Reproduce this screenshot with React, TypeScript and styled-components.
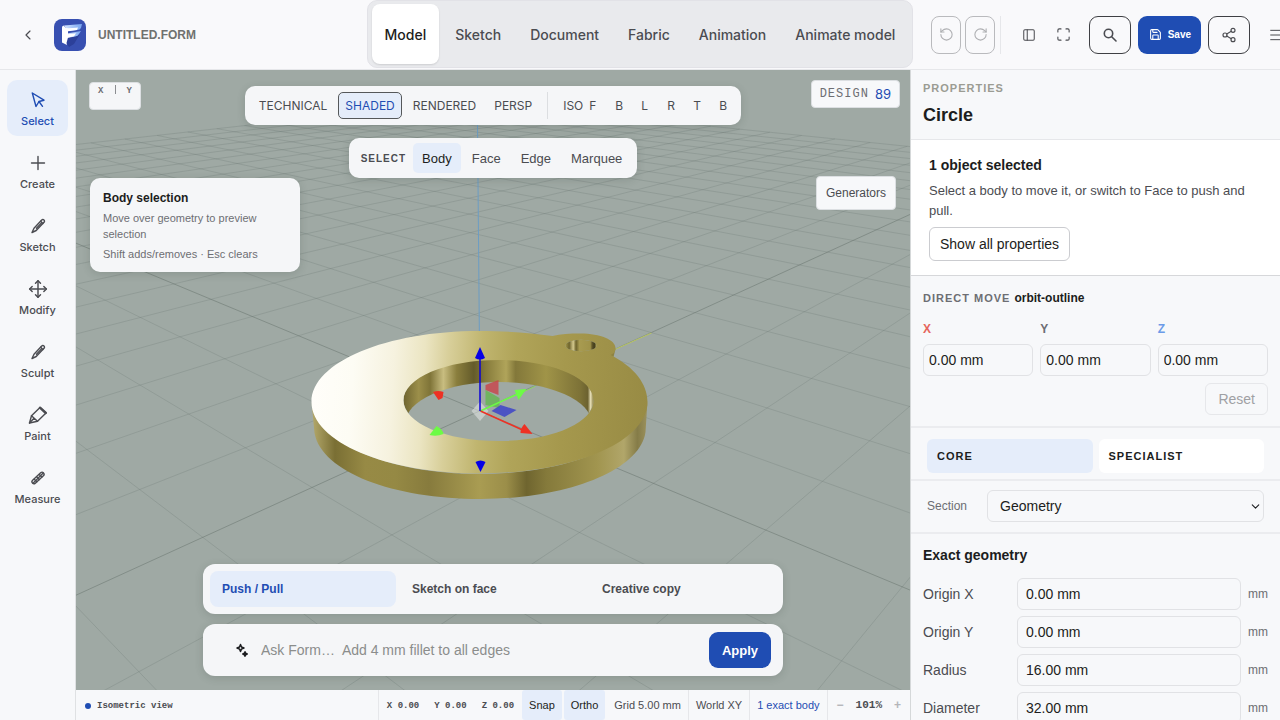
import React from "react";
import styled, { createGlobalStyle, css } from "styled-components";
import { ChevronDown, Maximize, Menu, Move, PanelLeft, RotateCcw, RotateCw, Save, Share2, ChevronLeft } from "lucide-react";

const sans = '"Liberation Sans", Arial, sans-serif';
const ui = 'Inter, "Liberation Sans", sans-serif';
const mono = '"Liberation Mono", monospace';

const ink = "#1c1d20";
const body = "#4b4c51";
const muted = "#6d6e73";
const blue = "#1f4db3";
const tint = "#e5edfa";
const line = "#e6e7ea";
const surface = "#f7f8fa";

const GlobalStyle = createGlobalStyle`
  *, *::before, *::after { box-sizing: border-box; }
  body { margin: 0; font-family: ${sans}; font-size: 14px; color: ${ink}; background: ${surface}; overflow: hidden; }
  button, input, select { font: inherit; color: inherit; margin: 0; }
  button { cursor: pointer; border: 0; background: none; padding: 0; }
  h1, h2, h3, p { margin: 0; }
`;

const Shell = styled.div`
  display: grid;
  grid-template-rows: 70px minmax(0, 1fr);
  height: 100vh;
`;

/* ---------- Header ---------- */

const Header = styled.header`
  display: grid;
  grid-template-columns: minmax(0, 1fr) auto minmax(0, 1fr);
  background: #f9f9fb;
  border-bottom: 1px solid ${line};
  overflow: hidden;
`;

const Brand = styled.div`
  display: flex;
  align-items: center;
  padding-left: 20px;
`;

const BackButton = styled.button`
  display: flex;
  width: 34px;
  color: ${body};
`;

const FileName = styled.h1`
  margin-left: 12px;
  font-size: 12px;
  font-weight: 700;
  color: #70716f;
`;

const ModeTabs = styled.nav`
  display: flex;
  gap: 3px;
  padding: 3px 4px;
  height: 68px;
  background: #e9eaed;
  border: 1px solid #e2e2e7;
  border-radius: 10px;
`;

const ModeTab = styled.button<{ $active?: boolean }>`
  padding: 0 13px;
  border-radius: 8px;
  font-family: ${ui};
  font-size: 14px;
  font-weight: 500;
  color: ${(p) => (p.$active ? ink : body)};
  ${(p) => p.$active && css`background: #fff; box-shadow: 0 1px 2px rgba(0, 0, 0, 0.12);`}
`;

const Actions = styled.div`
  display: flex;
  align-items: center;
  padding-left: 18px;
  color: ${body};
  white-space: nowrap;
`;

const HistoryGroup = styled.div`
  display: flex;
  gap: 4px;
  padding-right: 5px;
  border-right: 1px solid ${line};
`;

const HistoryButton = styled.button`
  display: flex;
  align-items: center;
  justify-content: center;
  width: 30px;
  height: 38px;
  border: 1px solid #b9babd;
  border-radius: 8px;
  color: #aeafb2;
`;

const PlainButton = styled.button`
  display: flex;
  flex: none;
  align-items: center;
  justify-content: center;
  width: 35px;
  height: 38px;
`;

const ViewGroup = styled.div`
  display: flex;
  padding: 0 8px 0 10px;
`;

const MainGroup = styled.div`
  display: flex;
  gap: 7px;
`;

const OutlineButton = styled.button`
  display: flex;
  align-items: center;
  justify-content: center;
  width: 42px;
  height: 38px;
  border: 1px solid #3f4044;
  border-radius: 9px;
`;

const SaveButton = styled.button`
  display: flex;
  align-items: center;
  justify-content: center;
  gap: 6px;
  width: 63px;
  height: 38px;
  border-radius: 9px;
  background: ${blue};
  color: #fff;
  font-size: 10px;
  font-weight: 700;
`;

const MenuButton = styled(PlainButton)`
  margin-left: 8px;
`;

/* ---------- Workspace ---------- */

const Workspace = styled.div`
  display: grid;
  grid-template-columns: 76px minmax(0, 1fr) 370px;
  min-height: 0;
`;

const Rail = styled.nav`
  display: flex;
  flex-direction: column;
  gap: 7px;
  padding: 10px 7px;
  background: ${surface};
  border-right: 1px solid #dfe1e3;
`;

const RailButton = styled.button<{ $active?: boolean }>`
  display: flex;
  flex-direction: column;
  align-items: center;
  gap: 3px;
  flex: none;
  height: 56px;
  padding-top: 10px;
  border-radius: 10px;
  font-family: ${ui};
  font-size: 11px;
  font-weight: 500;
  line-height: 16px;
  color: ${(p) => (p.$active ? blue : body)};
  background: ${(p) => (p.$active ? tint : "transparent")};
`;

const Center = styled.main`
  display: flex;
  flex-direction: column;
  min-width: 0;
  min-height: 0;
`;

const Viewport = styled.section`
  position: relative;
  flex: 1;
  min-height: 0;
  overflow: hidden;
  background: #9fa9a4;
`;

const SceneSvg = styled.svg`
  position: absolute;
  inset: 0;
  width: 100%;
  height: 100%;
`;

const floating = css`
  background: #f5f6f8;
  box-shadow: 0 2px 8px rgba(40, 50, 45, 0.16);
`;

const TopStack = styled.div`
  position: absolute;
  top: 16px;
  left: 0;
  right: 0;
  display: flex;
  flex-direction: column;
  align-items: center;
  gap: 13px;
`;

const ViewBar = styled.div`
  ${floating}
  display: flex;
  align-items: center;
  gap: 4px;
  height: 39px;
  padding: 0 7px;
  border-radius: 10px;
`;

const ShadeButton = styled.button<{ $active?: boolean }>`
  height: 27px;
  padding: 0 6px;
  border: 1px solid ${(p) => (p.$active ? "#55585a" : "transparent")};
  border-radius: 5px;
  font-family: ${ui};
  font-size: 12px;
  color: ${(p) => (p.$active ? blue : body)};
  background: ${(p) => (p.$active ? tint : "transparent")};
`;

const BarDivider = styled.span`
  width: 1px;
  height: 27px;
  margin: 0 4px;
  background: #dcdee1;
`;

const FaceViewButton = styled.button`
  display: flex;
  align-items: center;
  width: 22px;
  height: 27px;
  padding-left: 7px;
  font-family: ${ui};
  font-size: 12px;
  color: ${body};
`;

const SelectBar = styled.div`
  ${floating}
  display: flex;
  align-items: center;
  gap: 2px;
  height: 40px;
  padding: 0 6px 0 12px;
  border-radius: 10px;
`;

const BarLabel = styled.span`
  margin-right: 5px;
  font-size: 10px;
  font-weight: 700;
  letter-spacing: 1px;
  color: ${body};
`;

const SelectButton = styled.button<{ $active?: boolean }>`
  height: 30px;
  padding: 0 9px;
  border-radius: 5px;
  font-size: 13px;
  color: ${(p) => (p.$active ? ink : body)};
  background: ${(p) => (p.$active ? tint : "transparent")};
`;

const LeftStack = styled.div`
  position: absolute;
  top: 12px;
  left: 13px;
  display: flex;
  flex-direction: column;
  align-items: flex-start;
  gap: 68px;
`;

const AxisChip = styled.div`
  display: flex;
  justify-content: space-between;
  width: 52px;
  height: 28px;
  padding: 2px 8px;
  border: 1px solid #dcdfe2;
  border-radius: 4px;
  background: #f5f6f8;
  font-family: ${mono};
  font-size: 9px;
  font-weight: 700;
  line-height: 12px;
  color: ${muted};
`;

const AxisTick = styled.span`
  width: 1px;
  height: 9px;
  background: #8b8d91;
`;

const HintCard = styled.aside`
  ${floating}
  width: 210px;
  height: 94px;
  margin-left: 1px;
  padding: 12px 13px;
  border-radius: 10px;
  font-size: 11px;
  line-height: 16px;
  color: ${muted};
`;

const HintTitle = styled.h3`
  margin-bottom: 4px;
  font-size: 12px;
  line-height: 16px;
  color: ${ink};
`;

const HintText = styled.p`
  margin-bottom: 4px;
`;

const RightStack = styled.div`
  position: absolute;
  top: 10px;
  right: 10px;
  display: flex;
  flex-direction: column;
  align-items: flex-end;
  gap: 68px;
`;

const DesignChip = styled.div`
  display: flex;
  align-items: center;
  gap: 6px;
  height: 28px;
  padding: 0 8px;
  border: 1px solid #dcdfe2;
  border-radius: 4px;
  background: ${surface};
  font-family: ${mono};
  font-size: 12px;
  letter-spacing: 1px;
  color: ${muted};
`;

const DesignScore = styled.span`
  font-family: ${ui};
  font-size: 13px;
  letter-spacing: 0;
  color: ${blue};
`;

const GeneratorsButton = styled.button`
  height: 34px;
  margin-right: 4px;
  padding: 0 9px;
  border: 1px solid #dcdfe2;
  border-radius: 4px;
  background: ${surface};
  font-size: 12px;
  color: ${body};
`;

const BottomStack = styled.div`
  position: absolute;
  bottom: 14px;
  left: 0;
  right: 0;
  display: flex;
  flex-direction: column;
  gap: 10px;
  width: 580px;
  max-width: 90%;
  margin: 0 auto;
`;

const OperationBar = styled.div`
  ${floating}
  display: grid;
  grid-template-columns: repeat(3, 1fr);
  gap: 4px;
  height: 50px;
  padding: 7px;
  border-radius: 12px;
`;

const OperationButton = styled.button<{ $active?: boolean }>`
  padding: 0 12px;
  border-radius: 8px;
  text-align: left;
  font-size: 12px;
  font-weight: 700;
  color: ${(p) => (p.$active ? blue : body)};
  background: ${(p) => (p.$active ? tint : "transparent")};
`;

const PromptBar = styled.form`
  ${floating}
  display: flex;
  align-items: center;
  gap: 13px;
  height: 52px;
  padding: 0 12px 0 33px;
  border-radius: 12px;
`;

const PromptInput = styled.input`
  flex: 1;
  min-width: 0;
  padding: 0;
  border: 0;
  outline: 0;
  background: none;
  font-size: 14px;
  &::placeholder { color: #8b8d8c; opacity: 1; }
`;

const ApplyButton = styled.button`
  width: 62px;
  height: 36px;
  border-radius: 9px;
  background: ${blue};
  color: #fff;
  font-size: 13px;
  font-weight: 700;
`;

/* ---------- Status bar ---------- */

const StatusBar = styled.footer`
  display: flex;
  flex: none;
  height: 30px;
  background: ${surface};
  font-size: 11px;
  color: ${body};
`;

const StatusView = styled.div`
  display: flex;
  flex: 1;
  align-items: center;
  gap: 6px;
  padding: 1px 0 0 9px;
  border-right: 1px solid ${line};
  font-family: ${mono};
  font-size: 9px;
  font-weight: 700;
`;

const StatusDot = styled.span`
  width: 6px;
  height: 6px;
  border-radius: 50%;
  background: ${blue};
`;

const Coords = styled.div`
  display: flex;
  align-items: center;
  gap: 15px;
  padding: 1px 8px 0;
  font-family: ${mono};
  font-size: 9px;
  font-weight: 700;
`;

const StatusToggle = styled.button`
  margin-right: 2px;
  padding: 0 7px;
  background: ${tint};
  border-radius: 3px;
  color: ${ink};
`;

const StatusItem = styled.div<{ $accent?: boolean }>`
  display: flex;
  align-items: center;
  padding: 0 7px;
  border-right: 1px solid ${line};
  color: ${(p) => (p.$accent ? blue : "inherit")};
`;

const Zoom = styled.div`
  display: flex;
  align-items: center;
  gap: 12px;
  padding: 0 9px;
  font-family: ${mono};
  font-weight: 700;
`;

const ZoomStep = styled.button`
  font-family: ${sans};
  font-size: 12px;
  color: #b4b5b9;
`;

/* ---------- Properties ---------- */

const Panel = styled.aside`
  min-height: 0;
  overflow: hidden;
  background: ${surface};
  border-left: 1px solid #d5d8d9;
`;

const PanelHead = styled.div`
  height: 70px;
  padding: 11px 12px;
  border-bottom: 1px solid ${line};
`;

const Eyebrow = styled.div`
  font-size: 11px;
  font-weight: 700;
  letter-spacing: 1px;
  line-height: 14px;
  color: #9b9c93;
`;

const PanelTitle = styled.h2`
  margin-top: 8px;
  font-size: 18px;
  line-height: 24px;
`;

const SelectionCard = styled.section`
  padding: 16px 18px 14px;
  background: #fff;
  border-bottom: 1px solid #d6d7da;
`;

const SectionTitle = styled.h3`
  font-size: 14px;
  line-height: 18px;
`;

const SelectionText = styled.p`
  margin: 7px 0 6px;
  font-size: 13px;
  line-height: 20px;
  color: ${body};
`;

const PanelButton = styled.button`
  height: 34px;
  padding: 0 10px;
  border: 1px solid #cbccd0;
  border-radius: 6px;
  background: #fff;
  &:disabled { height: 32px; padding: 0 12px; border-color: ${line}; background: transparent; color: #9fa0a4; }
`;

const MoveSection = styled.section`
  padding: 12px 12px 11px;
  border-bottom: 2px solid #ebecef;
`;

const MoveHead = styled.div`
  display: flex;
  align-items: center;
  gap: 4px;
  height: 20px;
  font-size: 12px;
  font-weight: 700;
`;

const MoveLabel = styled(Eyebrow)`
  color: ${muted};
`;

const AxisGrid = styled.div`
  display: grid;
  grid-template-columns: repeat(3, 1fr);
  gap: 7px;
  margin: 12px 0 7px;
`;

const AxisField = styled.label<{ $color: string }>`
  display: grid;
  gap: 6px;
  font-size: 12px;
  font-weight: 700;
  line-height: 18px;
  color: ${(p) => p.$color};
`;

const TextInput = styled.input`
  width: 100%;
  min-width: 0;
  height: 32px;
  padding: 0 8px;
  border: 1px solid #e1e2e5;
  border-radius: 6px;
  background: transparent;
  font-size: 14px;
  font-weight: 400;
  color: ${ink};
`;

const AxisInput = styled(TextInput)`
  padding: 0 5px;
`;

const ResetRow = styled.div`
  display: flex;
  justify-content: flex-end;
`;

const ScopeTabs = styled.div`
  display: grid;
  grid-template-columns: 1fr 1fr;
  gap: 6px;
  padding: 11px 16px 6px;
  border-bottom: 2px solid #ebecef;
`;

const ScopeTab = styled.button<{ $active?: boolean }>`
  height: 34px;
  padding: 0 10px;
  border-radius: 6px;
  text-align: left;
  font-size: 11px;
  font-weight: 700;
  letter-spacing: 1px;
  background: ${(p) => (p.$active ? tint : "#fff")};
`;

const SectionRow = styled.label`
  display: flex;
  align-items: center;
  gap: 20px;
  height: 53px;
  padding: 0 16px 2px;
  border-bottom: 2px solid #ebecef;
  font-size: 12px;
  color: ${muted};
`;

const SelectWrap = styled.span`
  position: relative;
  flex: 1;
  color: ${ink};
`;

const SectionSelect = styled.select`
  appearance: none;
  width: 100%;
  height: 32px;
  padding: 0 12px;
  border: 1px solid #e1e2e5;
  border-radius: 6px;
  background: transparent;
  font-size: 14px;
`;

const SelectChevron = styled(ChevronDown)`
  position: absolute;
  right: 2px;
  top: 10px;
  pointer-events: none;
`;

const Geometry = styled.section`
  display: grid;
  gap: 6px;
  padding: 12px;
`;

const GeometryTitle = styled(SectionTitle)`
  margin-bottom: 8px;
`;

const FieldRow = styled.label`
  display: grid;
  grid-template-columns: 87px minmax(0, 1fr) 20px;
  align-items: center;
  gap: 7px;
  color: ${body};
`;

const Unit = styled.span`
  font-size: 12px;
  color: ${muted};
`;

/* ---------- Drawings ---------- */

const Logo = () => (
  <svg width="32" height="32" viewBox="0 0 32 32" aria-hidden="true">
    <defs>
      <linearGradient id="logoArm" x1="0" y1="0" x2="1" y2="0">
        <stop offset="0" stopColor="#d6e5ff" />
        <stop offset="1" stopColor="#77a5f0" />
      </linearGradient>
    </defs>
    <rect width="32" height="32" rx="8" fill="#3850b1" />
    <path d="M11 22l3-4 9-1 3-2-6 10-5 3z" fill="#2c409a" />
    <path d="M10 6.500L28 5l-1 4q-1 2-4 2l-9 1z" fill="url(#logoArm)" />
    <path d="M13 14.500L27 12l-2 3q-1 2-4 2.500L13 19z" fill="url(#logoArm)" />
    <path d="M8 8.500Q8 7 9.500 6.500L12 9q3 .5 12-.5l-1 2.500-9 1.200v3l8-1-2 3-6 1.200L12.500 24l.5 2-5-2.500z" fill="#fff" />
  </svg>
);

type IconProps = { children: React.ReactNode };
const RailIcon = ({ children }: IconProps) => (
  <svg width="20" height="20" viewBox="0 0 20 20" fill="none" stroke="currentColor" strokeWidth="1.4" strokeLinejoin="round" strokeLinecap="round" aria-hidden="true">
    {children}
  </svg>
);

const CursorIcon = () => (
  <RailIcon><path d="M4.300 3L16 10.200l-5 1.300-3 5z" /><path d="M11 11.500l3.500 4.800" /></RailIcon>
);
const PlusIcon = () => (
  <RailIcon><path d="M10 3.500v13M3.500 10h13" /></RailIcon>
);
const PenIcon = () => (
  <RailIcon>
    <path d="M16 4a1.500 1.500 0 0 0-2.300 0L6 12.300l-2 4.200 4.200-2L16 6.300a1.600 1.600 0 0 0 0-2.300z" />
    <path d="M8.500 12.200l4.700-4.900M12.700 5.200l2.200 2.200" />
  </RailIcon>
);
const MarkerIcon = () => (
  <RailIcon>
    <path d="M1.500 18l2-7.200L12 2.500 18 8l-8.500 8.200z" />
    <path d="M3.500 10.800l6 5.400M1.500 18L6 13.200" />
    <path d="M12 2.700L17.800 8" strokeWidth="2.400" />
  </RailIcon>
);
const RulerIcon = () => (
  <RailIcon>
    <rect x="2.500" y="8" width="15" height="4" rx="2" transform="rotate(-43 10 10)" />
    <path d="M6.300 11.300l2.500 2.400M8.800 9l2.500 2.400M11.300 6.600L13.800 9" />
    <path d="M5 15.200L15.200 5" />
  </RailIcon>
);

const SearchIcon = () => (
  <svg width="14" height="14" viewBox="0 0 14 14" fill="none" stroke="currentColor" strokeWidth="1.600" strokeLinecap="round" aria-hidden="true">
    <circle cx="5.500" cy="5.500" r="4.200" />
    <path d="M8.700 8.700l4.300 4.300" />
  </svg>
);

const SparkIcon = () => (
  <svg width="12" height="14" viewBox="0 0 12 14" fill="none" stroke={ink} strokeWidth="1.500" strokeLinejoin="round" aria-hidden="true">
    <path d="M4.500 1.500l1 2.500 2.500 1-2.500 1-1 2.500-1-2.500L1 5l2.500-1z" />
    <path d="M9 8.800l.7 1.500 1.500.7-1.500.7L9 13.200l-.7-1.500-1.500-.7 1.500-.7z" fill={ink} />
  </svg>
);

// Ground plane projection: u runs along the green axis, v along the red one.
const project = (u: number, v: number) => {
  const w = 1 + 0.078 * u - 0.0752 * v;
  return { x: (480 + 108.1 * u + 37.8 * v) / w, y: (411 - 0.2 * u - 0.17 * v) / w };
};
const EXTENT = 20;
const steps = Array.from({ length: EXTENT * 2 + 1 }, (_, i) => i - EXTENT);

const gridLine = (fixed: "u" | "v", at: number) => {
  const near = 0.3;
  if (fixed === "u") {
    const end = Math.min(EXTENT, (1 + 0.078 * at - near) / 0.0752);
    if (end <= -EXTENT) return null;
    return [project(at, -EXTENT), project(at, end)];
  }
  const start = Math.max(-EXTENT, (near - 1 + 0.0752 * at) / 0.078);
  if (start >= EXTENT) return null;
  return [project(start, at), project(EXTENT, at)];
};

const GroundGrid = () => (
  <g stroke="#66716c">
    {(["u", "v"] as const).flatMap((axis) =>
      steps.map((n) => {
        const seg = gridLine(axis, n);
        if (!seg) return null;
        return (
          <line key={axis + n} x1={seg[0].x} y1={seg[0].y} x2={seg[1].x} y2={seg[1].y} strokeOpacity={n === 0 ? 0.5 : 0.24} />
        );
      })
    )}
  </g>
);

const stops = (list: [number, string][]) => list.map(([at, color]) => <stop key={at} offset={at} stopColor={color} />);

const Scene = () => (
  <SceneSvg viewBox="76 70 835 620" preserveAspectRatio="xMidYMid slice" role="img" aria-label="Ring body in the 3D viewport">
    <defs>
      <linearGradient id="top" gradientUnits="userSpaceOnUse" x1="312" y1="390" x2="648" y2="410">
        {stops([[0, "#fffefa"], [0.12, "#fdfcf4"], [0.24, "#f6f2df"], [0.33, "#ebe5c2"], [0.4, "#d8cf9a"], [0.5, "#c0b56f"], [0.6, "#b0a459"], [0.75, "#a5984d"], [1, "#988b44"]])}
      </linearGradient>
      <linearGradient id="side" gradientUnits="userSpaceOnUse" x1="312" y1="0" x2="648" y2="0">
        {stops([[0, "#b5aa6d"], [0.07, "#7a6f34"], [0.16, "#978a45"], [0.25, "#958944"], [0.35, "#877b3d"], [0.5, "#a99c52"], [0.58, "#9b8e49"], [0.64, "#6f652f"], [0.7, "#857a3b"], [0.85, "#a1954f"], [0.93, "#b1a66a"], [0.97, "#857c48"], [1, "#9c925d"]])}
      </linearGradient>
      <linearGradient id="wall" gradientUnits="userSpaceOnUse" x1="404" y1="0" x2="594" y2="0">
        {stops([[0, "#6f6530"], [0.08, "#9c8f4a"], [0.14, "#7f7438"], [0.21, "#c8bd80"], [0.28, "#8a7e3d"], [0.37, "#645b2a"], [0.43, "#857a3a"], [0.54, "#b0a45a"], [0.59, "#83783a"], [0.75, "#a09448"], [0.93, "#7d7237"], [0.97, "#6c6230"], [0.985, "#e8e0b8"], [1, "#8a7e40"]])}
      </linearGradient>
      <linearGradient id="eyelet" gradientUnits="userSpaceOnUse" x1="566" y1="0" x2="597" y2="0">
        {stops([[0, "#a39648"], [0.12, "#6d632c"], [0.25, "#d5ca8e"], [0.34, "#6d632c"], [0.45, "#a89b50"], [0.8, "#a09349"], [0.86, "#5f5628"], [0.93, "#3f3a1c"], [1, "#a39648"]])}
      </linearGradient>
      <mask id="through">
        <rect x="76" y="70" width="835" height="620" fill="#fff" />
        <ellipse cx="499" cy="423" rx="93" ry="41" fill="#000" />
      </mask>
    </defs>

    <GroundGrid />
    <path d="M480 350L478 125" stroke="#6c9dc4" />
    <path d="M612 351L652 333" stroke="#b9c760" />

    <ellipse cx="499" cy="400" rx="95" ry="41" fill="url(#wall)" mask="url(#through)" />
    <path d="M606 350v6l8 1 2-8z" fill="#8f8342" />
    <path d="M312 402L315 433C322 472 394 499 481 499S641 470 646 432L648 401C644 442 572 474 480 474S315 442 312 402z" fill="url(#side)" />
    <path
      fillRule="evenodd"
      fill="url(#top)"
      d="M312 402C312 362 387 331 480 331C507 331 531 333 553 336C561 334 570 333.500 581 333.500C601 333.500 616 340 616 348C616 351 615 353 611 355C635 367 648 384 648 402C648 442 573 473.500 480 473.500S312 442 312 402zM404 400.500C404 423 446 441 499 441S594 423 594 400.500S552 360 499 360S404 378 404 400.500zM566 345.500A15 5.500 0 0 0 597 345.500A15 5.500 0 0 0 566 345.500z"
    />
    <ellipse cx="581.500" cy="345.500" rx="15.500" ry="5.700" fill="url(#eyelet)" />

    <path d="M472 411l8.500-9.500 8.500 9.500-8.500 10z" fill="#fff" opacity="0.4" />
    <path d="M486 385l13-5v15l-13-5z" fill="#c94248" opacity="0.8" />
    <path d="M486 390l14 8v10l-14-3z" fill="#5fb84a" opacity="0.75" />
    <path d="M492 411l9-6 16 5-12 7z" fill="#4349c6" opacity="0.9" />
    <path d="M518 395L536 386" stroke="#8fd464" />
    <path d="M481 411L518 394" stroke="#6dfb45" strokeWidth="1.500" />
    <path d="M527 389l-12 1 4 10z" fill="#6dfb45" />
    <path d="M481 411L523 430" stroke="#ee3124" strokeWidth="1.500" />
    <path d="M533 434l-8-10q-4 4-4 9z" fill="#ee3124" />
    <path d="M480.500 411V356" stroke="#0a00d8" strokeWidth="1.500" />
    <path d="M480.500 347l-5 11q5 3 10 0z" fill="#0600e6" />
    <path d="M481 472l-5-10q5-3 10 0z" fill="#0600e6" />
    <path d="M433.500 392q5-2 10.500 0l-1 6-4 2z" fill="#ee3124" />
    <path d="M430 435l7-9q6 3 7 8-7 3-14 1z" fill="#6dfb45" />
  </SceneSvg>
);

/* ---------- Content ---------- */

const modes = ["Model", "Sketch", "Document", "Fabric", "Animation", "Animate model"];
const tools = [
  { label: "Select", icon: <CursorIcon /> },
  { label: "Create", icon: <PlusIcon /> },
  { label: "Sketch", icon: <PenIcon /> },
  { label: "Modify", icon: <Move size={20} strokeWidth={1.75} /> },
  { label: "Sculpt", icon: <PenIcon /> },
  { label: "Paint", icon: <MarkerIcon /> },
  { label: "Measure", icon: <RulerIcon /> },
];
const shading = ["TECHNICAL", "SHADED", "RENDERED", "PERSP"];
const views: [string, string][] = [["ISO", "Isometric"], ["F", "Front"], ["B", "Back"], ["L", "Left"], ["R", "Right"], ["T", "Top"], ["B", "Bottom"]];
const filters = ["Body", "Face", "Edge", "Marquee"];
const operations = ["Push / Pull", "Sketch on face", "Creative copy"];
const axes = [
  { name: "X", color: "#e5655c" },
  { name: "Y", color: "#6d6e73" },
  { name: "Z", color: "#6b9be8" },
];
const fields: [string, string][] = [
  ["Origin X", "0.00 mm"],
  ["Origin Y", "0.00 mm"],
  ["Radius", "16.00 mm"],
  ["Diameter", "32.00 mm"],
];

export default function App() {
  return (
    <Shell>
      <GlobalStyle />
      <Header>
        <Brand>
          <BackButton aria-label="Back"><ChevronLeft size={16} strokeWidth={1.75} /></BackButton>
          <Logo />
          <FileName>UNTITLED.FORM</FileName>
        </Brand>
        <ModeTabs>
          {modes.map((m, i) => <ModeTab key={m} $active={i === 0}>{m}</ModeTab>)}
        </ModeTabs>
        <Actions>
          <HistoryGroup>
            <HistoryButton aria-label="Undo"><RotateCcw size={15} strokeWidth={1.75} /></HistoryButton>
            <HistoryButton aria-label="Redo"><RotateCw size={15} strokeWidth={1.75} /></HistoryButton>
          </HistoryGroup>
          <ViewGroup>
            <PlainButton aria-label="Toggle panel"><PanelLeft size={14} strokeWidth={1.75} /></PlainButton>
            <PlainButton aria-label="Full screen"><Maximize size={15} strokeWidth={1.75} /></PlainButton>
          </ViewGroup>
          <MainGroup>
            <OutlineButton aria-label="Search"><SearchIcon /></OutlineButton>
            <SaveButton><Save size={13} strokeWidth={2} />Save</SaveButton>
            <OutlineButton aria-label="Share"><Share2 size={16} strokeWidth={1.75} /></OutlineButton>
          </MainGroup>
          <MenuButton aria-label="Menu"><Menu size={16} strokeWidth={1.5} /></MenuButton>
        </Actions>
      </Header>

      <Workspace>
        <Rail>
          {tools.map((t, i) => <RailButton key={t.label} $active={i === 0}>{t.icon}{t.label}</RailButton>)}
        </Rail>

        <Center>
          <Viewport>
            <Scene />
            <TopStack>
              <ViewBar>
                {shading.map((s) => <ShadeButton key={s} $active={s === "SHADED"}>{s}</ShadeButton>)}
                <BarDivider />
                {views.map(([short, name]) => <FaceViewButton key={name} title={name}>{short}</FaceViewButton>)}
              </ViewBar>
              <SelectBar>
                <BarLabel>SELECT</BarLabel>
                {filters.map((f, i) => <SelectButton key={f} $active={i === 0}>{f}</SelectButton>)}
              </SelectBar>
            </TopStack>
            <LeftStack>
              <AxisChip><span>X</span><AxisTick /><span>Y</span></AxisChip>
              <HintCard>
                <HintTitle>Body selection</HintTitle>
                <HintText>Move over geometry to preview selection</HintText>
                <HintText>Shift adds/removes · Esc clears</HintText>
              </HintCard>
            </LeftStack>
            <RightStack>
              <DesignChip>DESIGN<DesignScore>89</DesignScore></DesignChip>
              <GeneratorsButton>Generators</GeneratorsButton>
            </RightStack>
            <BottomStack>
              <OperationBar>
                {operations.map((o, i) => <OperationButton key={o} $active={i === 0}>{o}</OperationButton>)}
              </OperationBar>
              <PromptBar onSubmit={(e) => e.preventDefault()}>
                <SparkIcon />
                <PromptInput aria-label="Ask Form" placeholder={"Ask Form…\u00a0 Add 4 mm fillet to all edges"} />
                <ApplyButton type="submit">Apply</ApplyButton>
              </PromptBar>
            </BottomStack>
          </Viewport>
          <StatusBar>
            <StatusView><StatusDot />Isometric view</StatusView>
            <Coords><span>X 0.00</span><span>Y 0.00</span><span>Z 0.00</span></Coords>
            <StatusToggle>Snap</StatusToggle>
            <StatusToggle>Ortho</StatusToggle>
            <StatusItem>Grid 5.00 mm</StatusItem>
            <StatusItem>World XY</StatusItem>
            <StatusItem $accent>1 exact body</StatusItem>
            <Zoom><ZoomStep aria-label="Zoom out">−</ZoomStep>101%<ZoomStep aria-label="Zoom in">+</ZoomStep></Zoom>
          </StatusBar>
        </Center>

        <Panel>
          <PanelHead>
            <Eyebrow>PROPERTIES</Eyebrow>
            <PanelTitle>Circle</PanelTitle>
          </PanelHead>
          <SelectionCard>
            <SectionTitle>1 object selected</SectionTitle>
            <SelectionText>Select a body to move it, or switch to Face to push and pull.</SelectionText>
            <PanelButton>Show all properties</PanelButton>
          </SelectionCard>
          <MoveSection>
            <MoveHead><MoveLabel>DIRECT MOVE</MoveLabel>orbit-outline</MoveHead>
            <AxisGrid>
              {axes.map((a) => (
                <AxisField key={a.name} $color={a.color}>{a.name}<AxisInput defaultValue="0.00 mm" /></AxisField>
              ))}
            </AxisGrid>
            <ResetRow><PanelButton disabled>Reset</PanelButton></ResetRow>
          </MoveSection>
          <ScopeTabs>
            <ScopeTab $active>CORE</ScopeTab>
            <ScopeTab>SPECIALIST</ScopeTab>
          </ScopeTabs>
          <SectionRow>
            Section
            <SelectWrap>
              <SectionSelect defaultValue="Geometry"><option>Geometry</option></SectionSelect>
              <SelectChevron size={13} strokeWidth={2} />
            </SelectWrap>
          </SectionRow>
          <Geometry>
            <GeometryTitle>Exact geometry</GeometryTitle>
            {fields.map(([name, value]) => (
              <FieldRow key={name}>{name}<TextInput defaultValue={value} /><Unit>mm</Unit></FieldRow>
            ))}
          </Geometry>
        </Panel>
      </Workspace>
    </Shell>
  );
}
